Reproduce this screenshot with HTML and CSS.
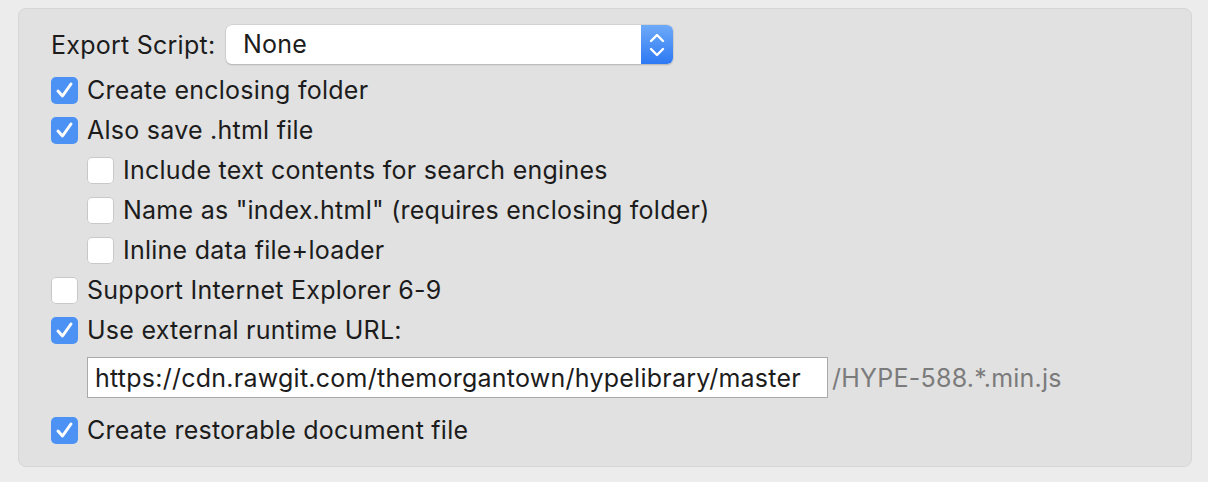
FILE: index.html
```html
<!DOCTYPE html>
<html>
<head>
<meta charset="utf-8">
<link rel="stylesheet" href="styles.css">
</head>
<body>
<div class="panel">
  <div class="row-select">
    <span class="label">Export Script:</span>
    <div class="select">
      <span class="select-value">None</span>
      <span class="stepper">
        <svg width="16" height="26" viewBox="0 0 16 26"><path d="M2 9 L8 3 L14 9" fill="none" stroke="#fff" stroke-width="2.4" stroke-linecap="round" stroke-linejoin="round"/><path d="M2 17 L8 23 L14 17" fill="none" stroke="#fff" stroke-width="2.4" stroke-linecap="round" stroke-linejoin="round"/></svg>
      </span>
    </div>
  </div>
  <div class="opt"><span class="cb on"><svg viewBox="0 0 27 27" width="27" height="27"><path d="M7 14 L11.5 19 L20 7" fill="none" stroke="#fff" stroke-width="3" stroke-linecap="round" stroke-linejoin="round"/></svg></span><span>Create enclosing folder</span></div>
  <div class="opt"><span class="cb on"><svg viewBox="0 0 27 27" width="27" height="27"><path d="M7 14 L11.5 19 L20 7" fill="none" stroke="#fff" stroke-width="3" stroke-linecap="round" stroke-linejoin="round"/></svg></span><span>Also save .html file</span></div>
  <div class="opt sub"><span class="cb"></span><span>Include text contents for search engines</span></div>
  <div class="opt sub"><span class="cb"></span><span>Name as "index.html" (requires enclosing folder)</span></div>
  <div class="opt sub"><span class="cb"></span><span>Inline data file+loader</span></div>
  <div class="opt"><span class="cb"></span><span>Support Internet Explorer 6-9</span></div>
  <div class="opt"><span class="cb on"><svg viewBox="0 0 27 27" width="27" height="27"><path d="M7 14 L11.5 19 L20 7" fill="none" stroke="#fff" stroke-width="3" stroke-linecap="round" stroke-linejoin="round"/></svg></span><span>Use external runtime URL:</span></div>
  <div class="url-row">
    <div class="url-input">https://cdn.rawgit.com/themorgantown/hypelibrary/master</div>
    <span class="url-suffix">/HYPE-588.*.min.js</span>
  </div>
  <div class="opt last"><span class="cb on"><svg viewBox="0 0 27 27" width="27" height="27"><path d="M7 14 L11.5 19 L20 7" fill="none" stroke="#fff" stroke-width="3" stroke-linecap="round" stroke-linejoin="round"/></svg></span><span>Create restorable document file</span></div>
</div>
</body>
</html>
```
FILE: styles.css
```css
html, body {
  margin: 0;
  padding: 0;
  background: #ececec;
}
body {
  padding: 8px 16px 0 18px;
  font-family: Inter, "Liberation Sans", Arial, sans-serif;
  font-size: 25px;
  letter-spacing: 0.25px;
  color: #1c1c1c;
}
.panel {
  width: 1174px;
  height: 459px;
  box-sizing: border-box;
  background: #e1e1e1;
  border: 1px solid #d6d6d6;
  border-radius: 8px;
  padding: 16px 0 0 32px;
}
.row-select {
  display: flex;
  align-items: center;
  height: 39px;
}
.label {
  width: 175px;
}
.select {
  display: flex;
  width: 447px;
  height: 39px;
  box-sizing: border-box;
  background: #fff;
  border-radius: 6px;
  box-shadow: 0 0 0 0.5px #c4c4c4, 0 1px 1.5px rgba(0,0,0,0.25);
  overflow: hidden;
}
.select-value {
  flex: 1;
  padding-left: 17px;
  line-height: 39px;
}
.stepper {
  width: 32px;
  display: flex;
  align-items: center;
  justify-content: center;
  background: linear-gradient(#6eaaf8, #2d79f4);
}
.opt {
  display: flex;
  align-items: center;
  height: 40px;
}
.row-select + .opt {
  margin-top: 6px;
}
.opt.sub {
  padding-left: 36px;
}
.cb {
  width: 27px;
  height: 27px;
  box-sizing: border-box;
  border-radius: 5px;
  background: #fff;
  box-shadow: 0 0 0 1px #c8c8c8 inset;
  margin-right: 9px;
  flex: none;
  display: flex;
}
.cb.on {
  background: #4c92f5;
  box-shadow: none;
}
.url-row {
  display: flex;
  align-items: center;
  padding-left: 36px;
  margin-top: 7px;
  height: 41px;
}
.url-input {
  width: 741px;
  height: 41px;
  box-sizing: border-box;
  background: #fff;
  border: 1px solid #a9a9a9;
  padding-left: 7px;
  line-height: 40px;
}
.url-suffix {
  color: #7b7b7b;
  margin-left: 4px;
}
.opt.last {
  margin-top: 12px;
}
```
